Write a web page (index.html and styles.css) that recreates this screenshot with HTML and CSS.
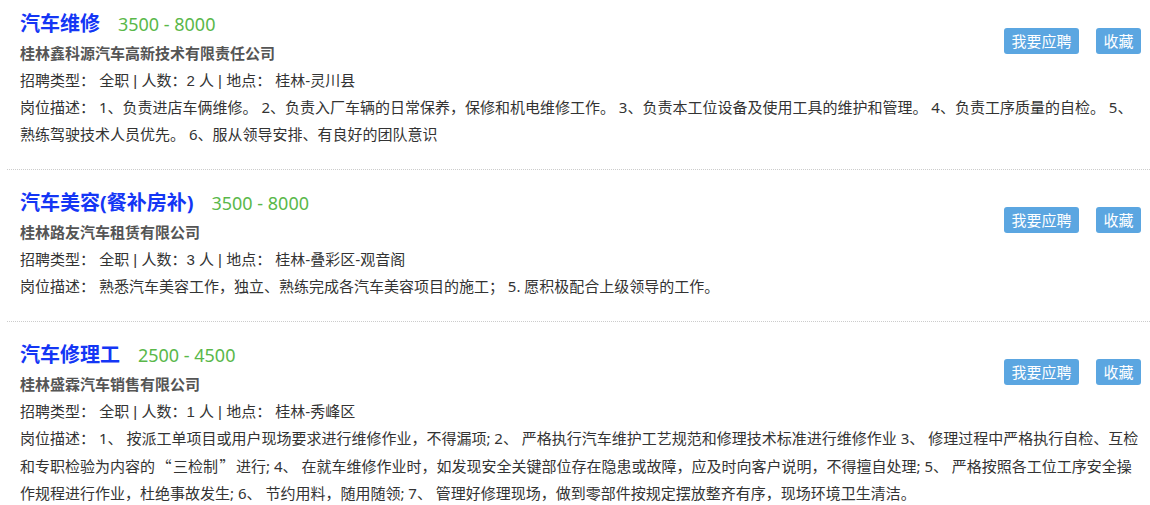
FILE: index.html
```html
<!DOCTYPE html>
<html lang="zh-CN">
<head>
  <meta charset="UTF-8" />
  <title>招聘信息</title>
  <link rel="stylesheet" href="styles.css">
</head>
<body>

<div class="job-list">

  <div class="job">
    <div class="job-btns">
      <a class="btn" href="#">我要应聘</a>
      <a class="btn" href="#">收藏</a>
    </div>
    <div class="job-title">
      <a href="#">汽车维修</a>
      <span class="salary">3500 - 8000</span>
    </div>
    <div class="company">桂林鑫科源汽车高新技术有限责任公司</div>
    <p class="meta">招聘类型： 全职 | 人数：2 人 | 地点： 桂林-灵川县</p>
    <p>岗位描述： 1、负责进店车俩维修。 2、负责入厂车辆的日常保养，保修和机电维修工作。 3、负责本工位设备及使用工具的维护和管理。 4、负责工序质量的自检。 5、熟练驾驶技术人员优先。 6、服从领导安排、有良好的团队意识</p>
  </div>

  <div class="job">
    <div class="job-btns">
      <a class="btn" href="#">我要应聘</a>
      <a class="btn" href="#">收藏</a>
    </div>
    <div class="job-title">
      <a href="#">汽车美容(餐补房补)</a>
      <span class="salary">3500 - 8000</span>
    </div>
    <div class="company">桂林路友汽车租赁有限公司</div>
    <p class="meta">招聘类型： 全职 | 人数：3 人 | 地点： 桂林-叠彩区-观音阁</p>
    <p>岗位描述： 熟悉汽车美容工作，独立、熟练完成各汽车美容项目的施工； 5. 愿积极配合上级领导的工作。</p>
  </div>

  <div class="job">
    <div class="job-btns">
      <a class="btn" href="#">我要应聘</a>
      <a class="btn" href="#">收藏</a>
    </div>
    <div class="job-title">
      <a href="#">汽车修理工</a>
      <span class="salary">2500 - 4500</span>
    </div>
    <div class="company">桂林盛霖汽车销售有限公司</div>
    <p class="meta">招聘类型： 全职 | 人数：1 人 | 地点： 桂林-秀峰区</p>
    <p>岗位描述： 1、 按派工单项目或用户现场要求进行维修作业，不得漏项; 2、 严格执行汽车维护工艺规范和修理技术标准进行维修作业 3、 修理过程中严格执行自检、互检和专职检验为内容的<span class="cjk">“</span>三检制<span class="cjk">”</span>进行; 4、 在就车维修作业时，如发现安全关键部位存在隐患或故障，应及时向客户说明，不得擅自处理; 5、 严格按照各工位工序安全操作规程进行作业，杜绝事故发生; 6、 节约用料，随用随领; 7、 管理好修理现场，做到零部件按规定摆放整齐有序，现场环境卫生清洁。</p>
  </div>

</div>

</body>
</html>
```

FILE: styles.css
```css
body {
  margin: 0;
  font-family: "Noto Sans", "Noto Sans CJK SC", sans-serif;
  font-size: 15px;
  color: #333;
  background: #fff;
}
a { text-decoration: none; }
p { margin: 0; }
.cjk {
  font-family: "Noto Sans CJK SC", sans-serif;
  padding: 0 1.5px;
}

.job-list {
  padding-left: 7px;
}
.job {
  padding: 18px 9px 21px 13px;
  border-bottom: 1px dotted #ccc;
}
.job:first-child { padding-top: 9px; }
.job:last-child { border-bottom: none; }

.job-btns {
  float: right;
  display: flex;
  gap: 17px;
  margin-top: 19px;
}
.btn {
  display: block;
  background: #5ba6e1;
  color: #fff;
  font-size: 15px;
  line-height: 26px;
  padding: 0 7.5px;
  border-radius: 3px;
}

.job-title {
  height: 30px;
  line-height: 30px;
}
.job-title a,
.salary {
  vertical-align: top;
}
.job-title a {
  font-size: 20px;
  font-weight: bold;
  color: #1436f5;
}
.salary {
  font-size: 18px;
  color: #5ab84a;
  margin-left: 14px;
}
.company {
  font-weight: bold;
  color: #555;
  line-height: 28px;
}
.job p {
  line-height: 27px;
}
.job .meta {
  font-family: "Liberation Sans", "Noto Sans CJK SC", sans-serif;
}
```
